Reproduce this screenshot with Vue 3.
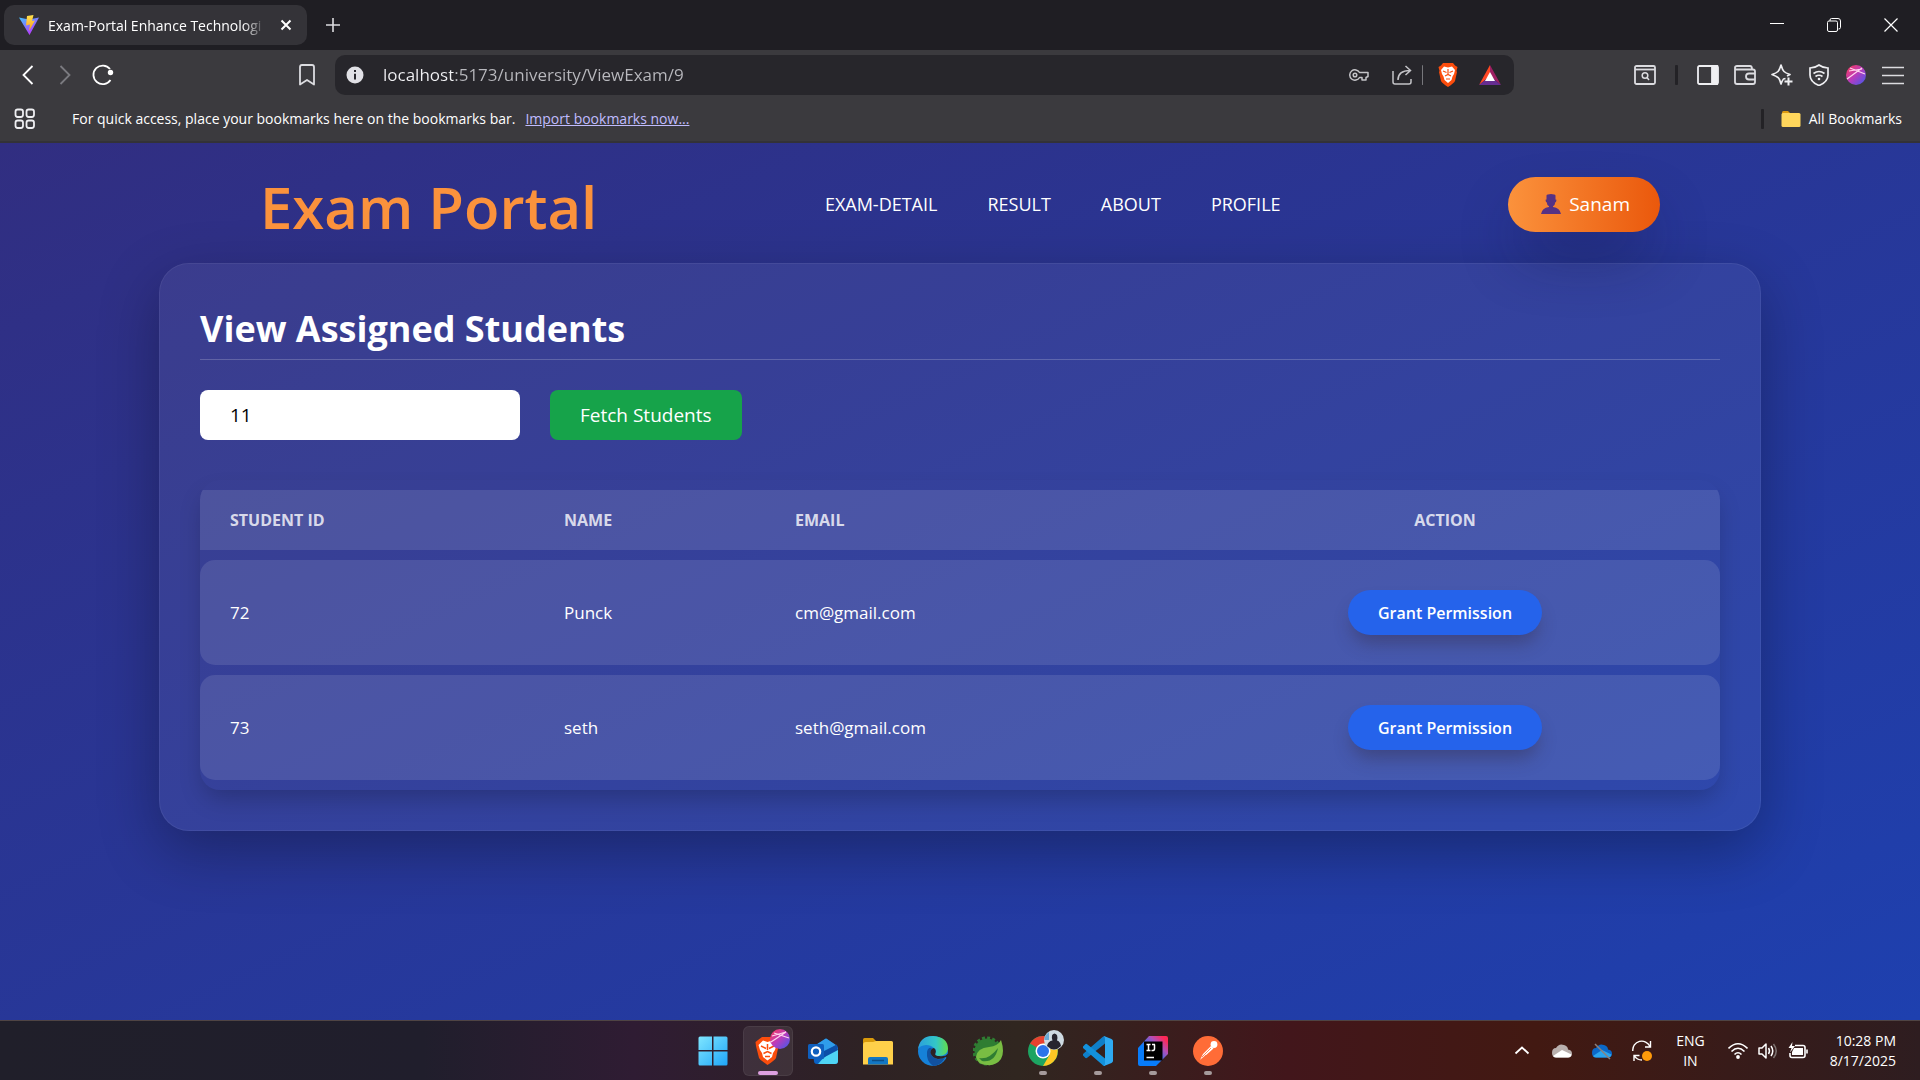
<script setup>
import { ref } from 'vue'

const address = ref('localhost:5173/university/ViewExam/9')
const examId = ref('11')
const links = ['EXAM-DETAIL', 'RESULT', 'ABOUT', 'PROFILE']
const students = ref([
  { id: 72, name: 'Punck', email: 'cm@gmail.com' },
  { id: 73, name: 'seth', email: 'seth@gmail.com' },
])
</script>

<template>
  <div class="screen">
    <header class="browser">
      <div class="tabs">
        <div class="tab">
          <svg class="favicon" width="20" height="20" viewBox="0 0 20 20" aria-hidden="true">
            <defs>
              <linearGradient id="viteBlue" x1="0" y1="0" x2="0.6" y2="1">
                <stop offset="0" stop-color="#41c4ff" /><stop offset="1" stop-color="#bd34fe" />
              </linearGradient>
              <linearGradient id="viteGold" x1="0" y1="0" x2="0" y2="1">
                <stop offset="0" stop-color="#ffe24d" /><stop offset="1" stop-color="#ff9a1f" />
              </linearGradient>
            </defs>
            <path d="M0 2.500 10 4.500 20 2.500 10.500 20Z" fill="url(#viteBlue)" />
            <path d="M8 1 14.500 0 13 6 16 5.500 10 16 11 9.500 7 10.500Z" fill="url(#viteGold)" />
          </svg>
          <span class="tab-title">Exam-Portal Enhance Technologi</span>
          <button class="icon-btn" aria-label="Close tab">
            <svg width="12" height="12" viewBox="0 0 12 12" fill="none" stroke="#fff" stroke-width="2"><path d="M1.500 1.500 10.500 10.500M10.500 1.500 1.500 10.500" /></svg>
          </button>
        </div>
        <button class="icon-btn new-tab" aria-label="New tab">
          <svg width="14" height="14" viewBox="0 0 14 14" fill="none" stroke="#dcdce0" stroke-width="1.600"><path d="M7 0V14M0 7H14" /></svg>
        </button>
        <div class="window-buttons">
          <button class="icon-btn" aria-label="Minimize">
            <svg width="14" height="14" viewBox="0 0 14 14" stroke="#fff"><path d="M0 5.500H14" /></svg>
          </button>
          <button class="icon-btn" aria-label="Restore">
            <svg width="14" height="14" viewBox="0 0 14 14" fill="none" stroke="#fff"><rect x="0.500" y="3" width="10" height="10.500" rx="1.500" /><path d="M3 3V2Q3 .500 4.500 .500H11Q13.500 .500 13.500 3V9.500Q13.500 11 11.500 11" /></svg>
          </button>
          <button class="icon-btn" aria-label="Close">
            <svg width="14" height="14" viewBox="0 0 14 14" fill="none" stroke="#fff" stroke-width="1.200"><path d="M.500 .500 13.500 13.500M13.500 .500 .500 13.500" /></svg>
          </button>
        </div>
      </div>

      <div class="toolbar">
        <div class="history">
          <button class="icon-btn" aria-label="Back">
            <svg width="12" height="20" viewBox="0 0 12 20" fill="none" stroke="#fff" stroke-width="1.800"><path d="M10.500 1 1.500 10 10.500 19" /></svg>
          </button>
          <button class="icon-btn" aria-label="Forward">
            <svg width="12" height="20" viewBox="0 0 12 20" fill="none" stroke="#7b7b80" stroke-width="1.800"><path d="M1.500 1 10.500 10 1.500 19" /></svg>
          </button>
          <button class="icon-btn" aria-label="Reload">
            <svg width="22" height="22" viewBox="0 0 22 22" fill="none" stroke="#fff" stroke-width="1.800"><path d="M18 5A9.300 9.300 0 1 0 18.500 16" /><circle cx="18.500" cy="8.500" r="2.700" fill="#fff" stroke="none" /></svg>
          </button>
        </div>
        <button class="icon-btn bookmark" aria-label="Bookmark this page">
          <svg width="16" height="22" viewBox="0 0 16 22" fill="none" stroke="#dcdce0" stroke-width="1.800" stroke-linejoin="round"><path d="M1 3Q1 1 3 1H13Q15 1 15 3V20.500L8 16 1 20.500Z" /></svg>
        </button>
        <div class="omnibox">
          <svg width="18" height="18" viewBox="0 0 18 18" aria-hidden="true"><circle cx="9" cy="9" r="8.500" fill="#e1e1e6" /><path d="M9 4V6M9 7.800V13.500" stroke="#27262b" stroke-width="2" /></svg>
          <input v-model="address" class="address" type="text" aria-label="Address" spellcheck="false" />
          <button class="icon-btn" aria-label="Passwords">
            <svg width="20" height="14" viewBox="0 0 20 14" fill="none" stroke="#c4c4c8" stroke-width="1.500"><path d="M10.500 4.500A5.200 5.200 0 1 0 10.500 9.500H13V12H17V9.500L19 8.500V4.500Z" stroke-linejoin="round" /><circle cx="6" cy="7" r="1.800" /></svg>
          </button>
          <button class="icon-btn share" aria-label="Share">
            <svg width="20" height="20" viewBox="0 0 20 20" fill="none" stroke="#c4c4c8" stroke-width="1.500"><path d="M1 6V17Q1 19 3 19H17Q19 19 19 17V14" /><path d="M6 15Q6 5.500 18 5.500M13.500 1 18.500 5.500 13.500 10" /></svg>
          </button>
          <span class="bar light"></span>
          <button class="icon-btn lion" aria-label="Brave Shields">
            <svg width="20" height="24" viewBox="0 0 20 24"><path d="M5 0H15L17 2.500 19.500 4 18.500 8 19 9 17 18Q16 20 10 24 4 20 3 18L1 9 1.500 8 .500 4 3 2.500Z" fill="#fb4d0d" /><path d="M10 4.500 14 3.500 17 7 16 11 14.500 13.500 13.500 17 10 20 6.500 17 5.500 13.500 4 11 3 7 6 3.500Z" fill="#fff" /><path d="M5 8 8.500 9.500M15 8 11.500 9.500M10 6V11M7 13 10 11.500 13 13M8 16H12" stroke="#fb4d0d" stroke-width="1.200" fill="none" /></svg>
          </button>
          <button class="icon-btn" aria-label="Brave Rewards">
            <svg width="22" height="20" viewBox="0 0 22 20"><path d="M11 0 0 20 11 11Z" fill="#ff4724" /><path d="M11 0 22 20 11 11Z" fill="#9e1f63" /><path d="M0 20H22L11 11Z" fill="#662d91" /><path d="M11 7 16 16H6Z" fill="#fff" /></svg>
          </button>
        </div>
        <div class="extensions">
          <button class="icon-btn find" aria-label="Search tabs">
            <svg width="22" height="20" viewBox="0 0 22 20" fill="none" stroke="#dcdce0" stroke-width="1.800"><rect x="1" y="1" width="20" height="18" rx="1.500" /><path d="M1 4.500H21" /><circle cx="11" cy="10.500" r="2.800" stroke-width="1.500" /><path d="M13 12.500 15 15" stroke-width="1.500" /></svg>
          </button>
          <span class="bar"></span>
          <button class="icon-btn" aria-label="Sidebar">
            <svg width="22" height="20" viewBox="0 0 22 20" fill="none" stroke="#efeff2" stroke-width="1.800"><rect x="1" y="1" width="20" height="18" rx="1.500" /><path d="M15 1H20V19H15Z" fill="#efeff2" /></svg>
          </button>
          <button class="icon-btn" aria-label="Wallet">
            <svg width="22" height="20" viewBox="0 0 22 20" fill="none" stroke="#dcdce0" stroke-width="1.800"><path d="M1 3V17Q1 19 3 19H19Q21 19 21 17V6.500Q21 4.500 19 4.500H2.500Q1 4.500 1 2.700 1 1 3 1H16Q18 1 18 4" /><path d="M21 8.500H15Q12 8.500 12 11.500 12 14.500 15 14.500H21" /></svg>
          </button>
          <button class="icon-btn" aria-label="Leo AI">
            <svg width="22" height="22" viewBox="0 0 22 22" fill="none" stroke="#efeff2" stroke-width="1.700" stroke-linejoin="round"><path d="M14.500 14.500 12.500 15Q11.500 16 10 20Q8.500 14.500 7 13.500 5.500 12.300 1 10.500 5.500 9 7 7.500 8.500 6 10 1 11.500 6 13 7.500 14.500 9 19 10.500L16 12" /><path d="M17.500 13.500V21.500M13.500 17.500H21.500" stroke-width="2" /></svg>
          </button>
          <button class="icon-btn" aria-label="VPN">
            <svg width="22" height="22" viewBox="0 0 22 22" fill="none" stroke="#efeff2" stroke-width="1.700"><path d="M11 1Q15 4 20 4V11Q20 18 11 21.500 2 18 2 11V4Q7 4 11 1Z" /><path d="M5.500 9.500Q11 5.500 16.500 9.500M7.500 12.500Q11 10 14.500 12.500" /><circle cx="11" cy="15" r="1.300" fill="#efeff2" stroke="none" /></svg>
          </button>
          <button class="icon-btn" aria-label="Profile">
            <svg width="22" height="20" viewBox="0 0 22 20">
              <defs>
                <linearGradient id="orb" x1="0" y1="0" x2="1" y2="1">
                  <stop offset="0" stop-color="#ff3b55" /><stop offset="0.500" stop-color="#b83bbd" /><stop offset="1" stop-color="#3a5cf0" />
                </linearGradient>
              </defs>
              <circle cx="11" cy="10" r="10" fill="url(#orb)" /><path d="M2 14 17 3M5 3 20 9M4 6 17 4" stroke="#ffd3ee" stroke-width="1.200" fill="none" />
            </svg>
          </button>
          <button class="icon-btn" aria-label="Menu">
            <svg width="22" height="20" viewBox="0 0 22 20" stroke="#dcdce0" stroke-width="1.600"><path d="M0 2.500H22M0 10.500H22M0 18.500H22" /></svg>
          </button>
        </div>
      </div>

      <div class="bookmarks">
        <button class="icon-btn apps" aria-label="Apps">
          <svg width="22" height="22" viewBox="0 0 22 22" fill="none" stroke="#efeff2" stroke-width="1.800"><rect x="1.500" y="1.500" width="7.500" height="7.500" rx="2.200" /><rect x="12.500" y="1.500" width="7.500" height="7.500" rx="2.200" /><rect x="1.500" y="12.500" width="7.500" height="7.500" rx="2.200" /><rect x="12.500" y="12.500" width="7.500" height="7.500" rx="2.200" /></svg>
        </button>
        <span>For quick access, place your bookmarks here on the bookmarks bar.</span>
        <a class="import" href="#import">Import bookmarks now...</a>
        <span class="bar push"></span>
        <button class="all-bookmarks">
          <svg width="20" height="16" viewBox="0 0 20 16" aria-hidden="true"><path d="M1 1.500Q1 0 2.500 0H7L9 2V6H1Z" fill="#dd9a12" /><rect x="0.500" y="2" width="19" height="14" rx="1.500" fill="#ffd65c" /></svg>
          All Bookmarks
        </button>
      </div>
    </header>

    <main class="page">
      <div class="site-header">
        <h1 class="logo">Exam Portal</h1>
        <nav class="site-nav">
          <a v-for="link in links" :key="link" :href="'#' + link.toLowerCase()">{{ link }}</a>
        </nav>
        <button class="user">
          <svg width="20" height="20" viewBox="0 0 20 20" aria-hidden="true"><path d="M5.500 1.500Q6 0 10 0T14.500 1.500L14.500 5.500 15.500 5.800 15 8 14.300 8.300Q14 11.500 12 12.300V13Q19 14 20 20H0Q1 14 8 13V12.300Q6 11.500 5.700 8.300L5 8 4.500 5.800 5.500 5.500Z" fill="#563284" /></svg>
          Sanam
        </button>
      </div>

      <section class="card">
        <h2>View Assigned Students</h2>
        <form class="lookup" @submit.prevent>
          <input v-model="examId" type="text" inputmode="numeric" aria-label="Exam ID" />
          <button type="submit">Fetch Students</button>
        </form>
        <div class="table-wrap">
          <table>
            <thead>
              <tr>
                <th class="c-id">STUDENT ID</th>
                <th class="c-name">NAME</th>
                <th>EMAIL</th>
                <th class="c-action">ACTION</th>
              </tr>
            </thead>
            <tbody>
              <tr v-for="s in students" :key="s.id">
                <td>{{ s.id }}</td>
                <td>{{ s.name }}</td>
                <td>{{ s.email }}</td>
                <td class="c-action"><button class="grant">Grant Permission</button></td>
              </tr>
            </tbody>
          </table>
        </div>
      </section>
    </main>

    <footer class="taskbar">
      <div></div>
      <div class="apps-row">
        <button class="app" aria-label="Start">
          <svg width="30" height="30" viewBox="0 0 30 30">
            <defs><linearGradient id="win" x1="0" y1="0" x2="1" y2="1"><stop offset="0" stop-color="#7fe6ff" /><stop offset="1" stop-color="#1fa5f8" /></linearGradient></defs>
            <path d="M2 .500H14V14H.500V2Q.500 .500 2 .500ZM15.500 .500H28Q29.500 .500 29.500 2V14H15.500ZM.500 15.500H14V29.500H2Q.500 29.500 .500 28ZM15.500 15.500H29.500V28Q29.500 29.500 28 29.500H15.500Z" fill="url(#win)" />
          </svg>
        </button>
        <button class="app active" aria-label="Brave">
          <svg class="badged" width="30" height="30" viewBox="-2 8 30 30">
            <path d="M7 9H19L22 12 24.500 14 23.500 18 21 30Q20 32 12.500 37 5 32 4 30L1 18 .500 14 3 12Z" fill="#fb4d0d" /><path d="M12.500 14 17 12.500 21.500 17 20 22 18 25 17 29 12.500 32.500 8 29 7 25 5 22 3.500 17 8 12.500Z" fill="#fff" /><path d="M6 18 11 20.500M19 18 14 20.500M12.500 16V22M8.500 25.500 12.500 23.500 16.500 25.500M10 28.500H15" stroke="#fb4d0d" stroke-width="1.500" fill="none" />
            <circle cx="25" cy="11" r="10" fill="url(#orb)" /><path d="M16 14 31 4M19 5 34 10M17 8 31 4" stroke="#ffd3ee" stroke-width="1.200" fill="none" />
          </svg>
        </button>
        <button class="app" aria-label="Outlook">
          <svg width="30" height="30" viewBox="0 0 30 30"><path d="M4 12 17 3Q18 2.200 19 3L30 11V25Q30 28 27 28H9Q6 28 6 25Z" fill="#0a62c4" /><path d="M6 10 17 3Q18 2.200 19 3L28 9 12 19Z" fill="#2f9dea" /><path d="M30 12V25Q30 28 27 28H10Q16 20 30 12Z" fill="#4fd5f5" /><path d="M12 17 29 8.500 30 14 13 23Z" fill="#0c4fa8" /><rect y="8" width="16" height="15" rx="1.500" fill="#0f5fbe" /><circle cx="8" cy="15.500" r="4.200" fill="none" stroke="#fff" stroke-width="2.200" /></svg>
        </button>
        <button class="app" aria-label="File Explorer">
          <svg width="30" height="28" viewBox="0 0 30 28"><path d="M0 2.500Q0 1 1.500 1H10L13 4V9H0Z" fill="#d99a0b" /><path d="M0 8Q0 5 3 5H10L13 4H28.500Q30 4 30 5.500V27.500H0Z" fill="#ffd04a" /><path d="M5 27.500V22Q5 20 7 20H23Q25 20 25 22V27.500Z" fill="#1277c4" /><path d="M9 23.500H21" stroke="#0c4e86" stroke-width="1.500" /></svg>
        </button>
        <button class="app" aria-label="Edge">
          <svg width="30" height="30" viewBox="0 0 30 30">
            <defs>
              <linearGradient id="edgeTop" x1="0" y1="0.500" x2="1" y2="0.500"><stop offset="0" stop-color="#2b9fdc" /><stop offset="0.600" stop-color="#33c7c7" /><stop offset="1" stop-color="#62dd4b" /></linearGradient>
            </defs>
            <circle cx="15" cy="15" r="15" fill="#1681d8" /><path d="M0 13Q2 0 15 0 30 1 30 13 29 20 21 20 16 20 17.500 17 19 14 16 12 13 9 8 9 2 9.500 0 13Z" fill="url(#edgeTop)" /><path d="M9 16Q10 11 14 12 11 16 14 20 18 25 27 22 22 30 15 30 8 25 9 16Z" fill="#11519f" /><path d="M16 12Q12 13 12.500 17 14 22 20 23 25 23 28 21L30.500 24V17Q28 21 21 20 16 20 17.500 17 18.500 14 16 12Z" fill="#2d2122" />
          </svg>
        </button>
        <button class="app" aria-label="Spring Tools">
          <svg width="30" height="30" viewBox="0 0 30 30"><circle cx="14" cy="15" r="12.500" fill="#2f7d32" /><circle cx="14" cy="15" r="13.300" fill="none" stroke="#2f7d32" stroke-width="2.600" stroke-dasharray="3 2.200" /><path d="M28 4Q32 16 28 23 23 30 14 29 5 29 3 21 4 12 16 11 25 10 28 4Z" fill="#79bd43" /><path d="M6 22Q16 24 25 12 22 27 9 25Z" fill="#2f7d32" /></svg>
        </button>
        <button class="app running" aria-label="Chrome">
          <svg class="badged" width="30" height="30" viewBox="0 8 30 30">
            <circle cx="15" cy="23" r="15" fill="#1da462" /><path d="M15 23 2 15.500Q6.500 8 15 8 24 8 28 15.500H15Z" fill="#e8412f" /><path d="M15 15.500H28Q31.500 23 28 30.500 23 38 15 38L21.500 27Z" fill="#fdc724" /><circle cx="15" cy="23" r="7.500" fill="#fff" /><circle cx="15" cy="23" r="6" fill="#2d74ea" />
            <circle cx="26" cy="12" r="10" fill="#cfdbe2" /><path d="M19 18Q20 13 24.500 12.500 22.500 6 26.500 5.500 30.500 6 29 12.500 32 13 33 18 26 25 19 18Z" fill="#27252e" /><path d="M16.500 10Q18 6 21 4V12H16.500Z" fill="#6ba8d2" />
          </svg>
        </button>
        <button class="app running" aria-label="Visual Studio Code">
          <svg width="30" height="30" viewBox="0 0 30 30"><path d="M0 19.500 2.500 22Q3.500 22.500 4.500 21.500L22 7.500V0Q20 0 19 1.500L0 18Z" fill="#0f7fc9" /><path d="M0 10.500 2.500 8Q3.500 7.500 4.500 8.500L22 22.500V30Q20 30 19 28.500L0 12Z" fill="#1391dc" /><path d="M21 0 28.500 3Q30 4 30 5V25Q30 26 28.500 27L21 30Q22 29 22 27V3Q22 1 21 0Z" fill="#2eaaf2" /></svg>
        </button>
        <button class="app running" aria-label="IntelliJ IDEA">
          <svg width="30" height="30" viewBox="0 0 30 30">
            <defs><linearGradient id="idea" x1="0" y1="1" x2="1" y2="0"><stop offset="0.400" stop-color="#087cfa" /><stop offset="0.700" stop-color="#b04fb8" /><stop offset="0.900" stop-color="#fe2857" /></linearGradient></defs>
            <path d="M0 12 11 0H28Q30 0 30 2V18L18 30H2Q0 30 0 28Z" fill="url(#idea)" /><rect x="6" y="5.500" width="18.500" height="19" fill="#000" /><path d="M8.500 8.500H12.500M10.500 8.500V14.500M8.500 14.500H12.500M14 8.500H17M16.500 8.500V13Q16.500 14.800 13.500 14.500M8.500 21.500H16" stroke="#fff" stroke-width="1.500" fill="none" />
          </svg>
        </button>
        <button class="app running" aria-label="Postman">
          <svg width="30" height="30" viewBox="0 0 30 30"><circle cx="15" cy="15" r="15" fill="#ff6c37" /><path d="M7 24 10 18 18 10 20.500 12.500 12 20Z" fill="#fff" /><circle cx="21" cy="8.500" r="3.400" fill="#fff" /><path d="M9 21 18 12M7 24.500 13 19" stroke="#ff6c37" stroke-width=".800" /></svg>
        </button>
      </div>

      <div class="tray">
        <button class="icon-btn" aria-label="Hidden icons">
          <svg width="20" height="20" viewBox="0 0 20 20" fill="none" stroke="#fff" stroke-width="1.800"><path d="M3.500 12.500 10 6.500 16.500 12.500" /></svg>
        </button>
        <button class="icon-btn" aria-label="OneDrive">
          <svg width="20" height="20" viewBox="0 0 20 20"><path d="M0 12Q0 7 4 7 7 2 12 4 16 5 16 8.500 20 9 20 12.500 20 16.500 16 16.500H4Q0 16 0 12Z" fill="#b9b0ae" /><path d="M1 15 10 9 19.500 13.500Q19 16.500 16 16.500H4Q2 16.500 1 15Z" fill="#fff" /></svg>
        </button>
        <button class="icon-btn" aria-label="OneDrive paused">
          <svg width="20" height="20" viewBox="0 0 20 20"><path d="M0 12Q0 7 4 7 7 2 12 4 16 5 16 8.500 20 9 20 12.500 20 16.500 16 16.500H4Q0 16 0 12Z" fill="#0b68c8" /><path d="M1 15 10 9 19.500 13.500Q19 16.500 16 16.500H4Q2 16.500 1 15Z" fill="#2aa4ee" /><path d="M3 3 18 18" stroke="#8a817f" stroke-width="1.500" /></svg>
        </button>
        <button class="icon-btn" aria-label="Updates">
          <svg width="20" height="22" viewBox="0 0 20 22" fill="none" stroke="#fff" stroke-width="1.400"><path d="M.800 11A9 9 0 0 1 18 6.500M18.500 1V7H13M2 21V15.500H7.500M2.500 16Q5 20 10 20" /><circle cx="15" cy="16" r="5" fill="#ff9a0a" stroke="none" /></svg>
        </button>
        <button class="lang">ENG<br />IN</button>
        <button class="icon-btn status" aria-label="Network, volume and battery">
          <svg width="20" height="18" viewBox="0 0 20 18" fill="none" stroke="#fff" stroke-width="1.600"><path d="M.500 6.500Q10-3 19.500 6.500M3.500 9.500Q10 3 16.500 9.500M6.500 12.500Q10 9 13.500 12.500" /><circle cx="10" cy="15" r="1.900" fill="#fff" stroke="none" /></svg>
          <svg width="20" height="18" viewBox="0 0 20 18" fill="none" stroke="#fff" stroke-width="1.500"><path d="M1 6H4L8 2V16L4 12H1Z" stroke-linejoin="round" /><path d="M10.500 6Q12.500 9 10.500 12M13 4Q16.500 9 13 14" /><path d="M15.500 2Q21 9 15.500 16" stroke="#7d7270" /></svg>
          <svg width="20" height="18" viewBox="0 0 20 18" fill="none" stroke="#fff" stroke-width="1.600"><path d="M7 3.500H15Q17 3.500 17 5.500V13.500Q17 15.500 15 15.500H4Q2 15.500 2 13.500V11M19 7.500V11.500" /><path d="M6 6H15V13H4V10Z" fill="#fff" stroke="none" /><path d="M4.500 0 .500 6H3.500L2 10.500 7 4H4Z" fill="#fff" stroke="none" /></svg>
        </button>
        <button class="clock">10:28 PM<br />8/17/2025</button>
      </div>
    </footer>
  </div>
</template>

<style>
body {
  margin: 0;
  background: #1e2f8c;
}
</style>

<style scoped>
.screen {
  min-height: 100vh;
  display: flex;
  flex-direction: column;
  font-family: "Open Sans", "Noto Sans", sans-serif;
  color: #fff;
}
.screen * {
  box-sizing: border-box;
}
button {
  margin: 0;
  padding: 0;
  border: 0;
  background: none;
  color: inherit;
  font: inherit;
  cursor: pointer;
}
svg {
  display: block;
  flex: none;
}
.icon-btn {
  display: flex;
  align-items: center;
  justify-content: center;
  flex: none;
}

/* Browser chrome */
.browser {
  background: #3b3a3e;
  border-bottom: 2px solid #333238;
  font-size: 14px;
}
.tabs {
  display: flex;
  align-items: center;
  height: 50px;
  padding: 0 22px 0 4px;
  background: #1f1e23;
}
.tab {
  display: flex;
  align-items: center;
  width: 303px;
  height: 40px;
  padding: 0 15px;
  border-radius: 10px;
  background: #343338;
}
.tab-title {
  flex: 1;
  margin-left: 9px;
  white-space: nowrap;
  mask-image: linear-gradient(90deg, #000 84%, transparent 94%);
}
.new-tab {
  margin-left: 19px;
}
.window-buttons {
  display: flex;
  gap: 43px;
  margin-left: auto;
}
.toolbar {
  display: flex;
  align-items: center;
  height: 50px;
  padding: 0 16px 0 22px;
}
.history {
  display: flex;
  align-items: center;
  gap: 25px;
}
.history .icon-btn:last-child {
  margin-left: -4px;
}
.bookmark {
  margin-left: 185px;
}
.omnibox {
  display: flex;
  align-items: center;
  flex: 1;
  height: 40px;
  margin-left: 20px;
  padding: 0 13px 0 11px;
  border-radius: 10px;
  background: #27262b;
}
.address {
  flex: 1;
  min-width: 0;
  height: 30px;
  margin-left: 19px;
  padding: 0 0 2px;
  border: 0;
  outline: 0;
  font: 17px "Open Sans", "Noto Sans", sans-serif;
  color: #b9b9be;
  background: linear-gradient(90deg, #f2f2f5 70px, #b9b9be 70px);
  background-clip: text;
  -webkit-text-fill-color: transparent;
}
.share {
  margin-left: 23px;
}
.bar {
  width: 3px;
  height: 20px;
  border-radius: 1px;
  background: #232226;
}
.bar.light {
  width: 1px;
  margin-left: 10px;
  background: #77777c;
}
.lion {
  margin: 0 21px 0 15px;
}
.extensions {
  display: flex;
  align-items: center;
  gap: 15px;
  margin-left: 120px;
}
.extensions .bar {
  margin: 0 4px;
}
.bookmarks {
  display: flex;
  align-items: center;
  height: 41px;
  padding: 0 18px 4px 14px;
}
.apps {
  margin-right: 36px;
}
.import {
  margin-left: 10px;
  color: #c0bcff;
}
.push {
  margin-left: auto;
}
.all-bookmarks {
  display: flex;
  align-items: center;
  gap: 8px;
  margin-left: 17px;
}

/* Exam portal page */
.page {
  flex: 1;
  padding: 0 40px 40px;
  background: linear-gradient(to bottom right, #312e81, #1e40af);
}
.site-header {
  display: flex;
  align-items: center;
  justify-content: space-between;
  max-width: 1600px;
  margin: 0 auto;
  padding: 28px 100px 26px;
}
.logo {
  margin: 0;
  padding-top: 6px;
  font-size: 58px;
  font-weight: 600;
  line-height: 60px;
  color: #fb923c;
}
.site-nav {
  display: flex;
  gap: 50px;
}
.site-nav a {
  color: #fff;
  font-size: 18px;
  text-decoration: none;
}
.user {
  display: flex;
  align-items: center;
  gap: 8px;
  height: 55px;
  padding: 0 30px 0 33px;
  border-radius: 28px;
  background: linear-gradient(90deg, #fb923c, #ea580c);
  box-shadow: 0 30px 60px -10px rgba(20, 20, 60, 0.45);
  font-size: 19px;
  font-weight: 500;
}
.card {
  max-width: 1602px;
  margin: 0 auto;
  padding: 40px;
  border: 1px solid rgba(255, 255, 255, 0.06);
  border-radius: 30px;
  background: rgba(255, 255, 255, 0.06);
  box-shadow: 0 20px 60px rgba(0, 0, 0, 0.3);
}
.card h2 {
  margin: 0;
  padding-bottom: 6px;
  border-bottom: 1px solid rgba(255, 255, 255, 0.2);
  font-size: 36px;
  font-weight: 700;
  line-height: 49px;
}
.lookup {
  display: flex;
  gap: 30px;
  margin: 30px 0 40px;
}
.lookup input {
  width: 320px;
  height: 50px;
  padding: 0 30px;
  border: 0;
  border-radius: 8px;
  background: #fff;
  color: #000;
  font: 19px "Open Sans", "Noto Sans", sans-serif;
}
.lookup button {
  height: 50px;
  padding: 0 30px;
  border-radius: 8px;
  background: #16a34a;
  font-size: 19px;
}
.table-wrap {
  overflow: hidden;
  border-radius: 20px;
  box-shadow: 0 12px 24px -4px rgba(0, 0, 0, 0.22);
}
table {
  width: 100%;
  border-spacing: 0 10px;
  table-layout: fixed;
}
th,
td {
  padding: 0 30px;
  background: rgba(255, 255, 255, 0.11);
  text-align: left;
}
th {
  height: 60px;
  font-size: 16px;
  font-weight: 700;
  color: rgba(255, 255, 255, 0.8);
}
td {
  height: 105px;
  font-size: 17px;
}
td:first-child {
  border-radius: 15px 0 0 15px;
}
td:last-child {
  border-radius: 0 15px 15px 0;
}
.c-id {
  width: 334px;
}
.c-name {
  width: 231px;
}
.c-action {
  width: 550px;
  text-align: center;
}
.grant {
  height: 45px;
  padding: 0 30px;
  border-radius: 23px;
  background: #2563eb;
  box-shadow: 0 12px 18px -4px rgba(50, 40, 60, 0.4);
  font-size: 16px;
  font-weight: 600;
}

/* Windows taskbar */
.taskbar {
  display: grid;
  grid-template-columns: 1fr auto 1fr;
  align-items: center;
  height: 60px;
  border-top: 1px solid #4f4444;
  background: linear-gradient(90deg, #201f2a, #201e2c 22%, #2f1c33 33%, #2e2224 45%, #302620 53%, #42161b 67%, #421912 80%, #2e1d20);
  font-size: 14px;
  line-height: 20px;
}
.apps-row {
  display: flex;
  gap: 5px;
}
.app {
  position: relative;
  display: flex;
  align-items: center;
  justify-content: center;
  width: 50px;
  height: 50px;
  border-radius: 6px;
}
.app.active {
  background: rgba(255, 255, 255, 0.08);
  box-shadow: inset 0 0 0 1px rgba(255, 255, 255, 0.06);
}
.app.active::after,
.app.running::after {
  content: "";
  position: absolute;
  bottom: 1px;
  left: 50%;
  width: 8px;
  height: 4px;
  margin-left: -4px;
  border-radius: 2px;
  background: #a59a9b;
}
.app.active::after {
  width: 20px;
  margin-left: -10px;
  background: #dda0e0;
}
.badged {
  overflow: visible;
}
.tray {
  display: flex;
  align-items: center;
  justify-content: flex-end;
  gap: 20px;
  padding-right: 24px;
}
.lang {
  margin-left: 4px;
}
.status {
  gap: 10px;
  margin: 0 2px 0 3px;
}
.clock {
  text-align: right;
}
</style>
